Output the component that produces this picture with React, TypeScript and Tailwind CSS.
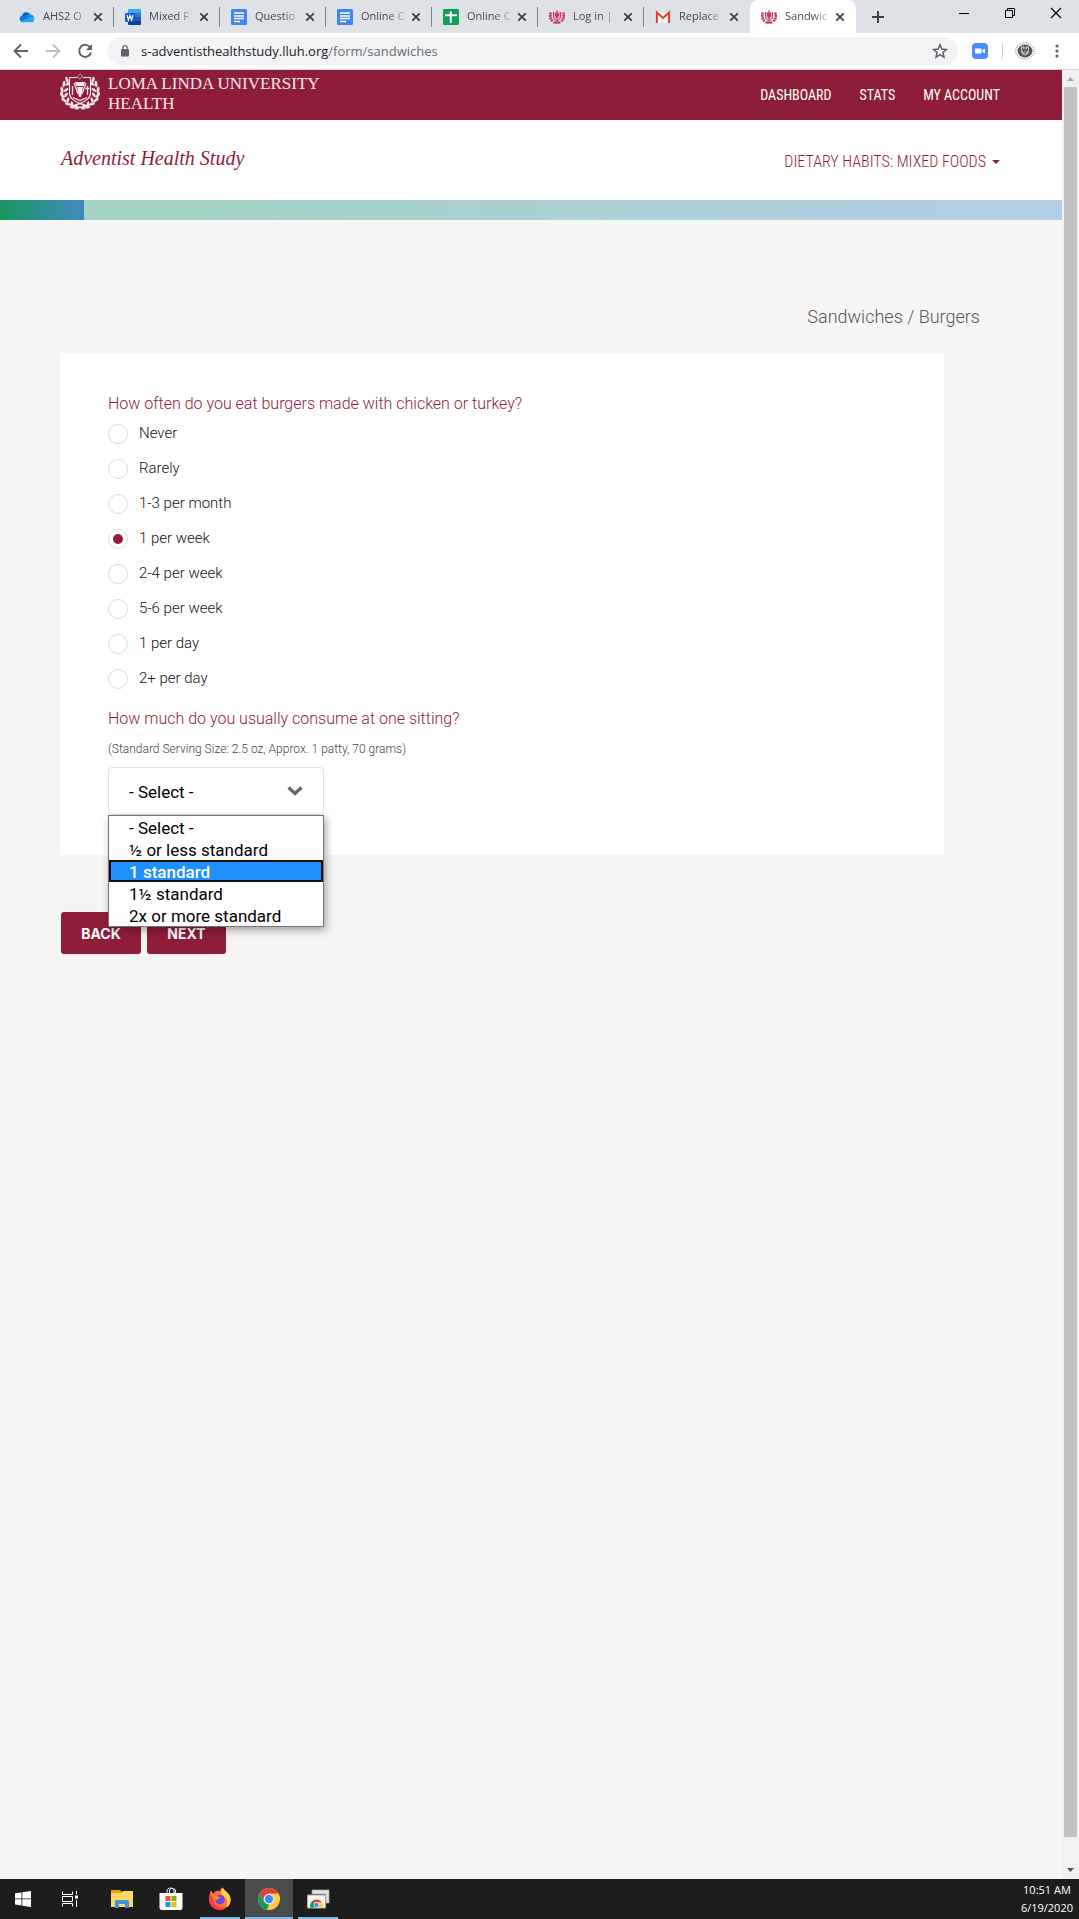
import clsx from "clsx"
import type React from "react"
import { useState } from "react"

const WordIcon = () => (
	<svg viewBox="0 0 16 16" className="size-4">
		<path d="M4 0h11a1 1 0 0 1 1 1v3H3V1a1 1 0 0 1 1-1z" fill="#41a5ee" />
		<path d="M3 4h13v4H3z" fill="#2b7cd3" />
		<path d="M3 8h13v4H3z" fill="#185abd" />
		<path d="M3 12h13v3a1 1 0 0 1-1 1H4a1 1 0 0 1-1-1z" fill="#103f91" />
		<rect y="4" width="10" height="9" rx="1" fill="#185abd" />
		<path
			d="M2 6l1.4 5L5 6.5 6.600 11 8 6"
			fill="none"
			stroke="#fff"
			strokeWidth="1.200"
		/>
	</svg>
)

const OneDriveIcon = () => (
	<svg viewBox="0 0 16 16" className="size-4">
		<path d="M3 6.500A4.500 4.500 0 0 1 11.500 6L9 10 2 9z" fill="#0364b8" />
		<path d="M11 5.500c3 0 4 2 4 4l-6 1-3-3c1-1.500 3-2 5-2z" fill="#1490df" />
		<path d="M3.500 6.500c2-.5 3.500.3 5 1.500l3 4-8 1.200A3.400 3.400 0 0 1 3.500 6.500z" fill="#0f78d4" />
		<path d="M2 12.500L10.500 8.200c1.200-.5 2.300-.4 3.300.2a2.500 2.500 0 0 1-.8 4.800H3.800c-.8 0-1.400-.2-1.800-.7z" fill="#28a8ea" />
	</svg>
)

const DocsIcon = () => (
	<svg viewBox="0 0 16 16" className="size-4">
		<rect width="16" height="16" rx="1.500" fill="#4285f4" />
		<path d="M3 4h10M3 7h10M3 9.500h10M3 12.500h6" stroke="#fff" strokeWidth="1.400" />
	</svg>
)

const SheetsIcon = () => (
	<svg viewBox="0 0 16 16" className="size-4">
		<rect width="16" height="16" rx="1.500" fill="#0f9d58" />
		<path d="M2 6.200h12M7.800 2.500v11.500" stroke="#fff" strokeWidth="2" />
	</svg>
)

const GmailIcon = () => (
	<svg viewBox="0 0 16 16" className="size-4">
		<path d="M1 3h14v11H1z" fill="#f1f1f1" />
		<path d="M1.900 14V3.500L8 9l6.100-5.500V14" fill="none" stroke="#d8402f" strokeWidth="2" />
	</svg>
)

const CrestFavicon = () => (
	<svg viewBox="0 0 16 16" className="size-4" fill="none" stroke="#c0355f">
		<path
			d="M2 3.500C.5 7 1 10 4 12.500M14 3.500c1.500 3.500 1 6.500-2 9"
			strokeWidth="2.600"
			strokeDasharray="2 .5"
		/>
		<path d="M4.500 3v4.500c0 2.500 1.500 3.500 3.500 4.500 2-1 3.500-2 3.500-4.500V3" strokeWidth="1" fill="#e8b4c4" />
		<path d="M8 1.500v9M6.300 4l1 4M9.800 4l-1 4" strokeWidth="1.300" />
		<path d="M4.500 13.500h7" strokeWidth="2.200" />
	</svg>
)

const leaves = [
	[7, 7, -15],
	[4, 11, -35],
	[2, 17, -20],
	[2, 22, 0],
	[4, 27, 20],
	[8, 31, 45],
	[13, 34, 65],
]

const Crest = () => (
	<svg viewBox="0 0 40 37" className="h-[37px] w-10 shrink-0" fill="none">
		{leaves.map(([x, y, r]) => (
			<g key={y} fill="#f7e9ed">
				<ellipse cx={x} cy={y} rx="1.400" ry="3.200" transform={`rotate(${-r - 30} ${x} ${y})`} />
				<ellipse cx={x + 4} cy={y} rx="1.300" ry="2.800" transform={`rotate(${35 - r} ${x + 4} ${y})`} />
				<ellipse cx={40 - x} cy={y} rx="1.400" ry="3.200" transform={`rotate(${r + 30} ${40 - x} ${y})`} />
				<ellipse cx={36 - x} cy={y} rx="1.300" ry="2.800" transform={`rotate(${r - 35} ${36 - x} ${y})`} />
			</g>
		))}
		<path
			d="M9.500 4.500H17M23 4.500h7.500v15c0 6-5 8.500-10.500 11-5.500-2.500-10.500-5-10.500-11v-15"
			fill="#8e1d39"
			stroke="#f7e9ed"
			strokeWidth="1.100"
		/>
		<path d="M20.500 1c3 2 1 4-.5 5-3-1-3-3 .5-5z" stroke="#e2b4c0" strokeWidth=".9" />
		<path d="M15 9h10l-1 4h-8zM17 14h6l-2 10h-2z" fill="#f7e9ed" />
		<path d="M14 10l4 11M26 10l-4 11" stroke="#f7e9ed" strokeWidth="1.200" />
		<path d="M12.500 13v9M27.500 13v9M25.500 15.500h4" stroke="#f7e9ed" strokeWidth="1.300" />
		<path d="M13 24.500l7 3 7-3" stroke="#f7e9ed" strokeWidth="1.300" />
		<path d="M12 33l8-2.500 8 2.500M15 36l5-2 5 2" stroke="#f7e9ed" strokeWidth="1.500" />
	</svg>
)

const tabs: { title: string; icon: React.ReactNode; active?: boolean }[] = [
	{ title: "AHS2 O", icon: <OneDriveIcon /> },
	{ title: "Mixed F", icon: <WordIcon /> },
	{ title: "Questio", icon: <DocsIcon /> },
	{ title: "Online C", icon: <DocsIcon /> },
	{ title: "Online C", icon: <SheetsIcon /> },
	{ title: "Log in |", icon: <CrestFavicon /> },
	{ title: "Replace", icon: <GmailIcon /> },
	{ title: "Sandwic", icon: <CrestFavicon />, active: true },
]

const TabBar = () => (
	<div className="flex h-[33px] bg-[#dee1e6]">
		<div className="flex pl-2">
			{tabs.map((tab, i) => (
				<div
					key={i}
					className={clsx(
						"flex w-[106px] items-center pl-[11px]",
						tab.active && "rounded-t-lg bg-white",
					)}
				>
					{tab.icon}
					<span className="ml-2 w-[47px] mask-r-from-60% whitespace-nowrap text-[11px] text-[#45494d]">
						{tab.title}
					</span>
					<button type="button" aria-label="Close tab" className="mr-[6px] size-4">
						<svg viewBox="0 0 16 16" stroke="#3c4043" strokeWidth="1.800">
							<path d="M4.300 4.300l7.400 7.400M11.700 4.300l-7.400 7.400" />
						</svg>
					</button>
					{i < 6 && <span className="ml-px h-5 w-px bg-[#808387]" />}
				</div>
			))}
		</div>
		<button type="button" aria-label="New tab" className="ml-3 w-5">
			<svg viewBox="0 0 20 20" stroke="#3c4043" strokeWidth="2">
				<path d="M4 10h12M10 4v12" />
			</svg>
		</button>
		<div className="ml-auto flex h-[26px]">
			<button type="button" aria-label="Minimize" className="w-[46px]">
				<svg viewBox="0 0 46 26" stroke="#000">
					<path d="M18 13.500h10" />
				</svg>
			</button>
			<button type="button" aria-label="Restore" className="w-[46px]">
				<svg viewBox="0 0 46 26" stroke="#000" fill="none">
					<path d="M18.500 10.500h7v7h-7zM20.500 10.500v-2h7v7h-2" />
				</svg>
			</button>
			<button type="button" aria-label="Close" className="w-[46px]">
				<svg viewBox="0 0 46 26" stroke="#000" strokeWidth="1.100">
					<path d="M18 8l10 10M28 8L18 18" />
				</svg>
			</button>
		</div>
	</div>
)

const Toolbar = () => (
	<div className="flex h-[37px] items-center border-b border-[#d5d6d8] bg-white pl-[9px] pr-[14px]">
		<button type="button" aria-label="Back" className="size-6">
			<svg viewBox="0 0 24 24" stroke="#5f6368" strokeWidth="1.900" fill="none">
				<path d="M19 12H6M12 5.500L5.500 12l6.500 6.500" />
			</svg>
		</button>
		<button type="button" aria-label="Forward" className="ml-2 size-6">
			<svg viewBox="0 0 24 24" stroke="#bbbdc0" strokeWidth="1.900" fill="none">
				<path d="M5 12h13M12 5.500l6.500 6.500-6.500 6.500" />
			</svg>
		</button>
		<button type="button" aria-label="Reload" className="ml-2 size-6">
			<svg viewBox="0 0 24 24" fill="none" stroke="#5f6368" strokeWidth="2">
				<path d="M17.500 9A6 6 0 1 0 18 13.500" />
				<path d="M19 5v6h-6z" fill="#5f6368" stroke="none" />
			</svg>
		</button>
		<div className="ml-[10px] flex h-7 flex-1 items-center rounded-full bg-[#f1f3f4] pl-3 pr-2">
			<svg viewBox="0 0 12 14" className="h-[14px] w-3">
				<rect x="2" y="5" width="8" height="7.500" rx="1" fill="#5f6368" />
				<path d="M3.800 5V3.700a2.200 2.200 0 0 1 4.400 0V5" fill="none" stroke="#5f6368" strokeWidth="1.200" />
			</svg>
			<span className="ml-[10px] pt-px text-[13px] text-[#202124]">
				s-adventisthealthstudy.lluh.org
				<span className="text-[#6b6f74]">/form/sandwiches</span>
			</span>
			<button type="button" aria-label="Bookmark" className="ml-auto size-5">
				<svg viewBox="0 0 20 20" fill="none" stroke="#5f6368" strokeWidth="1.500">
					<path d="M10 3.800l1.800 4.300 4.600.4-3.500 3 1.100 4.600-4-2.500-4 2.500 1.100-4.600-3.500-3 4.600-.4z" />
				</svg>
			</button>
		</div>
		<svg viewBox="0 0 16 16" className="ml-[14px] size-4">
			<rect width="16" height="16" rx="4" fill="#4a8cff" />
			<path d="M3 5.500h5.500a1 1 0 0 1 1 1v4H4a1 1 0 0 1-1-1zM10.300 7.200L13 5.500v5l-2.700-1.700z" fill="#fff" />
		</svg>
		<span className="ml-[14px] h-4 w-px bg-[#cfd1d4]" />
		<svg viewBox="0 0 20 20" className="ml-3 size-5" fill="none">
			<ellipse cx="10" cy="10" rx="9.300" ry="8" stroke="#777" strokeDasharray="1 1" />
			<ellipse cx="10" cy="10" rx="7.500" ry="6.500" fill="#555" />
			<path d="M6 5.500v4.500c0 2.500 2 3.500 4 4.500 2-1 4-2 4-4.500V5.500z" fill="#ccc" />
			<path d="M10 5v8.500M7.500 6.500l1.200 5M12.500 6.500l-1.200 5M6.500 9h7" stroke="#333" strokeWidth=".9" />
		</svg>
		<button type="button" aria-label="Menu" className="ml-[14px] size-4">
			<svg viewBox="0 0 16 16" fill="#5f6368">
				<circle cx="8" cy="3" r="1.600" />
				<circle cx="8" cy="8" r="1.600" />
				<circle cx="8" cy="13" r="1.600" />
			</svg>
		</button>
	</div>
)

const SiteHeader = () => (
	<>
		<header className="flex h-[50px] justify-between bg-[#8e1d39] pl-[60px] pr-[62px] text-white">
			<div className="flex gap-2 pt-[3px]">
				<Crest />
				<div className="pt-px font-['Liberation_Serif'] text-[17px] leading-5 text-[#f7e9ed]">
					LOMA LINDA UNIVERSITY
					<br />
					HEALTH
				</div>
			</div>
			<nav className="flex items-center gap-7 font-['Roboto_Condensed',sans-serif] text-sm">
				<a href="#dashboard">DASHBOARD</a>
				<a href="#stats">STATS</a>
				<a href="#account">MY ACCOUNT</a>
			</nav>
		</header>
		<div className="flex h-20 items-center justify-between bg-white pl-[61px] pr-[62px] text-[#8e1d39]">
			<div className="pb-1 font-['Liberation_Serif'] text-xl italic">Adventist Health Study</div>
			<button
				type="button"
				className="flex items-center gap-[6px] pt-1 font-['Roboto_Condensed',sans-serif] text-base font-light"
			>
				DIETARY HABITS: MIXED FOODS
				<svg viewBox="0 0 8 4" className="h-1 w-2" fill="#8e1d39">
					<path d="M0 0h8L4 4z" />
				</svg>
			</button>
		</div>
		<div className="h-5 bg-linear-to-r from-[#a3d4c0] to-[#b2cfe5]">
			<div className="h-5 w-[84px] bg-linear-to-r from-[#18965f] to-[#4287bd]" />
		</div>
	</>
)

const frequencies = [
	"Never",
	"Rarely",
	"1-3 per month",
	"1 per week",
	"2-4 per week",
	"5-6 per week",
	"1 per day",
	"2+ per day",
]

const servings = [
	"- Select -",
	"½ or less standard",
	"1 standard",
	"1½ standard",
	"2x or more standard",
]

const SurveyForm = () => {
	const [frequency, setFrequency] = useState("1 per week")
	const [serving, setServing] = useState(servings[0])

	return (
		<form className="pl-[60px] pr-[118px] font-['Roboto',sans-serif]">
			<div className="bg-white px-12 pb-10 pt-[39px]">
				<fieldset>
					<legend className="text-base leading-6 font-light text-[#8e1d39]">
						How often do you eat burgers made with chicken or turkey?
					</legend>
					{frequencies.map((label) => (
						<label
							key={label}
							className="flex h-[35px] items-center gap-[11px] text-[15px] font-light text-[#111]"
						>
							<input
								type="radio"
								name="frequency"
								checked={frequency === label}
								onChange={() => setFrequency(label)}
								className="size-5 appearance-none rounded-full border border-[#dcdcdc] bg-clip-content p-1 checked:bg-[#8e1d39]"
							/>
							{label}
						</label>
					))}
				</fieldset>
				<label htmlFor="serving" className="mt-[11px] block text-base leading-6 font-light text-[#8e1d39]">
					How much do you usually consume at one sitting?
				</label>
				<p className="mt-2 text-xs leading-5 font-light text-[#444]">
					(Standard Serving Size: 2.5 oz, Approx. 1 patty, 70 grams)
				</p>
				<div className="relative mt-2 w-[216px]">
					<select
						id="serving"
						value={serving}
						onChange={(e) => setServing(e.target.value)}
						className="h-12 w-full appearance-none rounded-sm border border-[#e3e3e3] bg-white px-5 pt-1 text-[17px] text-black"
					>
						{servings.map((s) => (
							<option key={s}>{s}</option>
						))}
					</select>
					<svg
						viewBox="0 0 16 10"
						className="pointer-events-none absolute right-[21px] top-[19px] h-[10px] w-4"
						fill="none"
						stroke="#666"
						strokeWidth="3.200"
					>
						<path d="M1.500 1.500L8 7.500l6.500-6" />
					</svg>
					{/* opened list */}
					<ul
						role="listbox"
						aria-label="Serving size"
						className="absolute left-0 top-full z-10 w-full border border-[#767676] bg-white text-[17px] leading-6 text-black shadow-[2px_3px_8px_rgba(0,0,0,0.35)]"
					>
						{servings.map((s) => (
							<li
								key={s}
								role="option"
								aria-selected={s === "1 standard"}
								onClick={() => setServing(s)}
								className={clsx(
									"h-[22px] px-5",
									s === "1 standard" &&
										"bg-[#1e90ff] font-medium text-white outline-2 -outline-offset-2 outline-[#101010]",
								)}
							>
								{s}
							</li>
						))}
					</ul>
				</div>
			</div>
			<div className="mt-[57px] flex gap-[6px] pl-px font-['Inter',sans-serif] text-sm font-bold text-white">
				<button type="button" className="h-[42px] w-20 rounded-[3px] bg-[#8e1d39] pt-[2px]">
					BACK
				</button>
				<button type="button" className="h-[42px] w-[79px] rounded-[3px] bg-[#8e1d39] pt-[2px]">
					NEXT
				</button>
			</div>
		</form>
	)
}

const Scrollbar = () => (
	<div className="flex w-[17px] flex-col items-center bg-[#f1f1f1]">
		<svg viewBox="0 0 17 17" className="size-[17px]" fill="#a3a3a3">
			<path d="M5 11h7L8.500 7z" />
		</svg>
		<div className="mb-[25px] w-[13px] flex-1 bg-[#c1c1c1]" />
		<svg viewBox="0 0 17 17" className="size-[17px]" fill="#505050">
			<path d="M5 6h7l-3.500 4z" />
		</svg>
	</div>
)

const ChromeLogo = () => (
	<>
		<circle cx="12" cy="12" r="11" fill="#ffcd40" />
		<path d="M2.500 6.500A11 11 0 0 1 21.500 6.500H12L7.200 14.700z" fill="#db4437" />
		<path d="M2.500 6.500L7.200 14.700 12 17.500l-2 5.300A11 11 0 0 1 2.500 6.500z" fill="#0f9d58" />
		<circle cx="12" cy="12" r="5.300" fill="#f1f1f1" />
		<circle cx="12" cy="12" r="4.200" fill="#4285f4" />
	</>
)

const apps = [
	{
		name: "File Explorer",
		icon: (
			<>
				<path d="M1 3h9l2 2h11v15H1z" fill="#e5a50f" />
				<path d="M1 6h10l2-2h10v16H1z" fill="#ffd767" />
				<path d="M5 21v-6.500a1.500 1.500 0 0 1 1.500-1.500h11a1.500 1.500 0 0 1 1.500 1.500V21h-4v-4H9v4z" fill="#3a96dd" />
			</>
		),
	},
	{
		name: "Microsoft Store",
		icon: (
			<>
				<path d="M8 6V4c0-4 7-4 7 0v2M10.500 6V4c0-3.500 6-3.500 6 0v2" fill="none" stroke="#fff" />
				<path d="M.5 6h23v14.500a2.500 2.500 0 0 1-2.500 2.500H3a2.500 2.500 0 0 1-2.500-2.500z" fill="#fff" />
				<path d="M6.500 9h5v5h-5z" fill="#f25022" />
				<path d="M12.500 9h5v5h-5z" fill="#7fba00" />
				<path d="M6.500 15h5v5h-5z" fill="#00a4ef" />
				<path d="M12.500 15h5v5h-5z" fill="#ffb900" />
			</>
		),
	},
	{
		name: "Firefox",
		state: "running",
		icon: (
			<>
				<path d="M2.500 3.500l3 3C8 3 10 4 12 4c0-2 1.500-3 3-3.500 0 3 7.500 5 7.700 12.500A11 11 0 0 1 1 13c0-4 1-6 1.500-9.500z" fill="#ff7139" />
				<path d="M15 .5c0 3 7.500 5 7.700 12.500A10 10 0 0 1 18 21c3-6 0-10-3-12-3-1.500-2-6 0-8.500z" fill="#ffcf3f" />
				<path d="M1 13a11 11 0 0 0 17.500 8C12 22.500 6 19 5.500 12l-3-4c-.8 2-1.500 3-1.500 5z" fill="#ff3650" />
				<circle cx="12" cy="12.500" r="4.800" fill="#7542e5" />
				<path d="M5.500 9c3-1 4 1 7 1-1 2-3 1.500-3.500 3C6 13 5 11 5.500 9z" fill="#ff980e" />
			</>
		),
	},
	{ name: "Chrome", state: "active", icon: <ChromeLogo /> },
	{
		name: "Chrome Remote Desktop",
		state: "running",
		icon: (
			<>
				<path d="M6 3h17v13h-3V7H6z" fill="#e4e4e4" stroke="#aaa" strokeWidth=".7" />
				<path d="M1.500 8h18v13h-18z" fill="#f3f3f3" stroke="#aaa" />
				<path d="M4 20.500a6.500 6.500 0 0 1 3-6.500l3.500 6.500z" fill="#0f9d58" />
				<path d="M5 15.500a6.500 6.500 0 0 1 11 0z" fill="#db4437" />
				<path d="M16 15.500a6 6 0 0 1 1 5h-6l2-5z" fill="#ffcd40" />
				<circle cx="10.500" cy="18" r="2.500" fill="#4285f4" stroke="#fff" strokeWidth=".7" />
			</>
		),
	},
]

const Taskbar = () => (
	<footer className="flex h-10 bg-[#1d1d1d] text-white">
		<button type="button" aria-label="Start" className="flex w-[46px] items-center justify-center">
			<svg viewBox="0 0 16 16" className="size-4" fill="#fff">
				<path d="M0 2.300L6.500 1.400v6.100H0zM7.300 1.200L16 0v7.500H7.300zM0 8.300h6.500v6.200L0 13.600zM7.300 8.300H16V16l-8.700-1.300z" />
			</svg>
		</button>
		<button type="button" aria-label="Task view" className="flex w-12 items-center justify-center">
			<svg viewBox="0 0 16 16" className="size-4" stroke="#fff" fill="none">
				<path d="M.5.500v3h10v-3M.5 5.500h10v5H.5zM.5 15.500v-3h10v3M14.500 0v3M14.500 9v7" />
				<path d="M13 4.500h3v3h-3z" fill="#fff" stroke="none" />
			</svg>
		</button>
		<div className="ml-1 flex gap-px">
			{apps.map((app) => (
				<button
					key={app.name}
					type="button"
					aria-label={app.name}
					className={clsx(
						"flex w-12 flex-col items-center justify-between pt-2",
						app.state === "active" && "bg-[#4b4b4b]",
					)}
				>
					<svg viewBox="0 0 24 24" className="size-6">
						{app.icon}
					</svg>
					{app.state && (
						<span
							className={clsx(
								"h-[2px] bg-[#76b9ed]",
								app.state === "active" ? "w-full" : "w-10",
							)}
						/>
					)}
				</button>
			))}
		</div>
		<div className="ml-auto flex flex-col items-center justify-center pr-[6px] text-[11px] leading-[18px]">
			<span>10:51 AM</span>
			<span>6/19/2020</span>
		</div>
	</footer>
)

export default function App() {
	return (
		<div className="flex min-h-screen flex-col bg-[#f6f5f3] font-['Open_Sans',sans-serif]">
			<TabBar />
			<Toolbar />
			<div className="flex flex-1">
				<main className="flex-1">
					<SiteHeader />
					<h1 className="pb-5 pr-[82px] pt-[81px] text-right font-['Roboto',sans-serif] text-lg leading-8 font-light text-[#555]">
						Sandwiches / Burgers
					</h1>
					<SurveyForm />
				</main>
				<Scrollbar />
			</div>
			<Taskbar />
		</div>
	)
}
